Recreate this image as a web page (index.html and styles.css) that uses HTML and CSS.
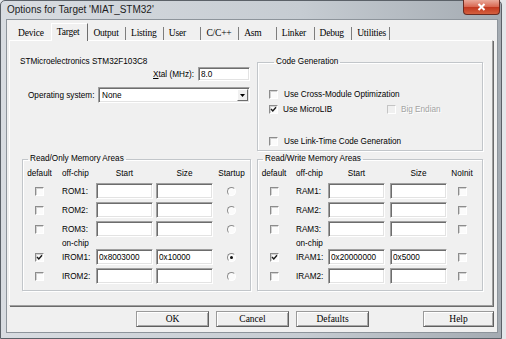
FILE: index.html
```html
<!DOCTYPE html>
<html lang="en">
<head>
    <meta charset="UTF-8">
    <title>Options for Target 'MIAT_STM32'</title>
    <link rel="stylesheet" href="styles.css">
</head>
<body>

    <div class="window">
        <!-- Title bar -->
        <div class="titlebar">
            <span class="title">Options for Target 'MIAT_STM32'</span>
            <span class="close">
                <svg width="9" height="8" viewBox="0 0 9 8"><path d="M1.5 1 L7.5 7 M7.5 1 L1.5 7" stroke="#fff" stroke-width="2"/></svg>
            </span>
        </div>

        <div class="client">
            <!-- Tabs -->
            <div class="tabs">
                <span class="tab first">Device</span>
                <span class="tab active">Target</span>
                <span class="tab">Output</span>
                <span class="tab">Listing</span>
                <span class="tab">User</span>
                <span class="tab">C/C++</span>
                <span class="tab">Asm</span>
                <span class="tab">Linker</span>
                <span class="tab">Debug</span>
                <span class="tab">Utilities</span>
            </div>

            <div class="panel">
                <div class="top">
                    <div class="device-col">
                        <div class="device">STMicroelectronics STM32F103C8</div>
                        <div class="xtal-row">
                            <label><u>X</u>tal (MHz):</label>
                            <input class="field xtal" type="text" value="8.0">
                        </div>
                        <div class="os-row">
                            <label>Operating system:</label>
                            <div class="select">
                                <span>None</span>
                                <span class="drop">
                                    <svg width="5" height="3" viewBox="0 0 5 3"><path d="M0 0 H5 L2.5 3 Z" fill="#000"/></svg>
                                </span>
                            </div>
                        </div>
                    </div>

                    <fieldset class="group codegen">
                        <legend>Code Generation</legend>
                        <div class="opt first-opt"><span class="cb"></span><span>Use Cross-Module Optimization</span></div>
                        <div class="opt two-col">
                            <div class="opt-inner"><span class="cb on"><svg width="7" height="7" viewBox="0 0 7 7"><path d="M1 3 L2.8 5 L6 1.2" stroke="#1a1a1a" stroke-width="1.4" fill="none"/></svg></span><span>Use MicroLIB</span></div>
                            <div class="opt-inner disabled"><span class="cb off"></span><span>Big Endian</span></div>
                        </div>
                        <div class="opt last-opt"><span class="cb"></span><span>Use Link-Time Code Generation</span></div>
                    </fieldset>
                </div>

                <div class="mem">
                    <!-- Read only areas -->
                    <fieldset class="group rom">
                        <legend>Read/Only Memory Areas</legend>
                        <div class="row head">
                            <span class="c">default</span>
                            <span class="l">off-chip</span>
                            <span class="h">Start</span>
                            <span class="h">Size</span>
                            <span class="c">Startup</span>
                        </div>
                        <div class="row mrow">
                            <span class="cb"></span>
                            <span class="l">ROM1:</span>
                            <input class="field" type="text" value="">
                            <input class="field" type="text" value="">
                            <span class="rb"></span>
                        </div>
                        <div class="row mrow">
                            <span class="cb"></span>
                            <span class="l">ROM2:</span>
                            <input class="field" type="text" value="">
                            <input class="field" type="text" value="">
                            <span class="rb"></span>
                        </div>
                        <div class="row mrow">
                            <span class="cb"></span>
                            <span class="l">ROM3:</span>
                            <input class="field" type="text" value="">
                            <input class="field" type="text" value="">
                            <span class="rb"></span>
                        </div>
                        <div class="row onchip">
                            <span></span>
                            <span class="l">on-chip</span>
                        </div>
                        <div class="row mrow first-chip">
                            <span class="cb on"><svg width="7" height="7" viewBox="0 0 7 7"><path d="M1 3 L2.8 5 L6 1.2" stroke="#1a1a1a" stroke-width="1.4" fill="none"/></svg></span>
                            <span class="l">IROM1:</span>
                            <input class="field" type="text" value="0x8003000">
                            <input class="field" type="text" value="0x10000">
                            <span class="rb on"></span>
                        </div>
                        <div class="row mrow">
                            <span class="cb"></span>
                            <span class="l">IROM2:</span>
                            <input class="field" type="text" value="">
                            <input class="field" type="text" value="">
                            <span class="rb"></span>
                        </div>
                    </fieldset>

                    <!-- Read/write areas -->
                    <fieldset class="group ram">
                        <legend>Read/Write Memory Areas</legend>
                        <div class="row head">
                            <span class="c">default</span>
                            <span class="l">off-chip</span>
                            <span class="h">Start</span>
                            <span class="h">Size</span>
                            <span class="c">NoInit</span>
                        </div>
                        <div class="row mrow">
                            <span class="cb"></span>
                            <span class="l">RAM1:</span>
                            <input class="field" type="text" value="">
                            <input class="field" type="text" value="">
                            <span class="cb"></span>
                        </div>
                        <div class="row mrow">
                            <span class="cb"></span>
                            <span class="l">RAM2:</span>
                            <input class="field" type="text" value="">
                            <input class="field" type="text" value="">
                            <span class="cb"></span>
                        </div>
                        <div class="row mrow">
                            <span class="cb"></span>
                            <span class="l">RAM3:</span>
                            <input class="field" type="text" value="">
                            <input class="field" type="text" value="">
                            <span class="cb"></span>
                        </div>
                        <div class="row onchip">
                            <span></span>
                            <span class="l">on-chip</span>
                        </div>
                        <div class="row mrow first-chip">
                            <span class="cb on"><svg width="7" height="7" viewBox="0 0 7 7"><path d="M1 3 L2.8 5 L6 1.2" stroke="#1a1a1a" stroke-width="1.4" fill="none"/></svg></span>
                            <span class="l">IRAM1:</span>
                            <input class="field" type="text" value="0x20000000">
                            <input class="field" type="text" value="0x5000">
                            <span class="cb"></span>
                        </div>
                        <div class="row mrow">
                            <span class="cb"></span>
                            <span class="l">IRAM2:</span>
                            <input class="field" type="text" value="">
                            <input class="field" type="text" value="">
                            <span class="cb"></span>
                        </div>
                    </fieldset>
                </div>
            </div>

            <!-- Dialog buttons -->
            <div class="buttons">
                <button type="button">OK</button>
                <button type="button">Cancel</button>
                <button type="button">Defaults</button>
                <button type="button" class="help">Help</button>
            </div>
        </div>
    </div>

</body>
</html>
```

FILE: styles.css
```css
/* Page */
body {
    margin: 0;
    background-color: #e4e7ea;
    font-family: "Liberation Sans", Arial, sans-serif;
    font-size: 8.2px;
    color: #000;
}

/* Window frame */
.window {
    width: 502px;
    height: 339px;
    box-sizing: border-box;
    border: 1px solid #5b6168;
    border-radius: 5px 5px 0 0;
    background: linear-gradient(to right, #d8dce1, #c6ccd2 60%, #a4abb2);
    display: flex;
    flex-direction: column;
}

.titlebar {
    height: 18px;
    flex: none;
    display: flex;
    justify-content: space-between;
    padding-left: 6px;
}

.title {
    font-size: 10px;
    line-height: 18px;
    color: #1c1c1c;
}

.close {
    width: 37px;
    height: 15px;
    box-sizing: border-box;
    margin-top: -1px;
    margin-right: 1px;
    border: 1px solid #6a2b21;
    border-top: none;
    border-radius: 0 0 4px 4px;
    background: linear-gradient(#eaa99a, #d8664f 50%, #c2381f 52%, #d4603f);
    display: flex;
    align-items: center;
    justify-content: center;
}

.client {
    flex: 1;
    margin: 0 3px 5px 5px;
    background-color: #f0f0f0;
    border: 1px solid #8d949b;
    display: flex;
    flex-direction: column;
}

/* Tabs */
.tabs {
    height: 20px;
    flex: none;
    display: flex;
    align-items: flex-end;
    padding-left: 6px;
    font-family: "Liberation Serif", "Times New Roman", serif;
    font-size: 9.5px;
    letter-spacing: -0.2px;
}

.tab {
    width: 37.7px;
    height: 13px;
    box-sizing: border-box;
    padding-left: 5px;
    line-height: 13px;
    border-right: 1px solid #7d7d7d;
    white-space: nowrap;
}

.tab.first {
    border-right: none;
}

.tab.active {
    height: 18px;
    margin-bottom: -1px;
    padding-top: 2px;
    line-height: 13px;
    border-top: 1px solid #fff;
    border-left: 1px solid #fff;
    border-right: 1px solid #6e6e6e;
    background-color: #f0f0f0;
    position: relative;
    z-index: 1;
}

/* Tab page */
.panel {
    height: 266px;
    box-sizing: border-box;
    margin: 0 4px 0 2px;
    border: 1px solid;
    border-color: #fff #a0a0a0 #a0a0a0 #fff;
    box-shadow: 1px 1px 0 #6b6b6b;
}

.top {
    display: flex;
    margin-top: 16px;
}

.device-col {
    width: 247px;
}

.device {
    height: 10px;
    line-height: 10px;
    padding-left: 10px;
}

.xtal-row {
    display: flex;
    justify-content: flex-end;
    align-items: center;
    gap: 4px;
    padding-right: 7px;
    height: 14px;
}

.os-row {
    display: flex;
    align-items: center;
    gap: 3px;
    margin-top: 6px;
    padding-left: 18px;
}

.os-row label {
    width: 67px;
}

/* Edit boxes */
.field {
    box-sizing: border-box;
    height: 16px;
    width: 57px;
    margin: 0;
    padding: 0 2px;
    font-family: "Liberation Sans", Arial, sans-serif;
    font-size: 8.2px;
    color: #000;
    background-color: #fff;
    border: 1px solid;
    border-color: #a0a0a0 #fff #fff #a0a0a0;
    box-shadow: inset 1px 1px 0 #6d6d6d, inset -1px -1px 0 #e3e3e3;
    outline: none;
}

.field.xtal {
    width: 52px;
    height: 14px;
}

.select {
    width: 152px;
    height: 16px;
    box-sizing: border-box;
    display: flex;
    align-items: center;
    justify-content: space-between;
    padding-left: 3px;
    background-color: #fff;
    border: 1px solid;
    border-color: #a0a0a0 #fff #fff #a0a0a0;
    box-shadow: inset 1px 1px 0 #6d6d6d, inset -1px -1px 0 #e3e3e3;
}

.drop {
    width: 11px;
    height: 12px;
    margin-right: 1px;
    box-sizing: border-box;
    background-color: #f0f0f0;
    border: 1px solid;
    border-color: #fff #6d6d6d #6d6d6d #fff;
    display: flex;
    align-items: center;
    justify-content: center;
}

/* Group boxes */
.group {
    margin: 0;
    padding: 0;
    box-sizing: border-box;
    border: 1px solid #c2c6ca;
    box-shadow: 1px 1px 0 #fff, inset 1px 1px 0 #fff;
    min-width: 0;
}

.group legend {
    margin-left: 5px;
    padding: 0 2px;
    line-height: 10px;
}

.codegen {
    width: 226px;
    height: 94px;
    padding-left: 11px;
}

.opt {
    display: flex;
    align-items: center;
    gap: 6px;
    height: 12px;
    margin-top: 3px;
}

.opt.first-opt {
    margin-top: 21px;
}

.opt.last-opt {
    margin-top: 20px;
}

.opt.two-col {
    display: grid;
    grid-template-columns: 112px auto;
}

.opt-inner {
    display: flex;
    align-items: center;
    gap: 5px;
}

.disabled {
    color: #a3a3a3;
    text-shadow: 1px 1px 0 #fff;
}

/* Check boxes and radio buttons */
.cb {
    width: 9px;
    height: 9px;
    box-sizing: border-box;
    background-color: #fbfbfb;
    border: 1px solid;
    border-color: #8c8c8c #fff #fff #8c8c8c;
    box-shadow: inset 1px 1px 0 #d2d2d2;
    display: flex;
    align-items: center;
    justify-content: center;
    flex: none;
}

.cb.off {
    background-color: #f0f0f0;
    border-color: #c4c4c4 #fff #fff #c4c4c4;
    box-shadow: none;
}

.rb {
    width: 9px;
    height: 9px;
    box-sizing: border-box;
    border-radius: 50%;
    background-color: #fbfbfb;
    border: 1px solid;
    border-color: #8c8c8c #fff #fff #8c8c8c;
    display: flex;
    align-items: center;
    justify-content: center;
}

.rb.on::after {
    content: "";
    width: 3px;
    height: 3px;
    border-radius: 50%;
    background-color: #111;
}

/* Memory areas */
.mem {
    display: flex;
    gap: 6px;
    margin-top: 3px;
    padding-left: 12px;
}

.rom, .ram {
    height: 137px;
    padding-top: 3px;
}

.rom {
    width: 229px;
}

.ram {
    width: 226px;
}

.row {
    display: grid;
    align-items: center;
}

.rom .row {
    grid-template-columns: 33px 40px 60px 57px 1fr;
}

.ram .row {
    grid-template-columns: 32px 38px 62px 58px 28px;
}

.row .cb, .row .rb {
    justify-self: center;
}

.row .l {
    padding-left: 6px;
}

.row .c {
    text-align: center;
}

.row .h {
    width: 57px;
    text-align: center;
}

.row.head {
    height: 12px;
}

.row.mrow {
    height: 16px;
    margin-top: 3px;
}

.rom .row.mrow:nth-child(3) , .ram .row.mrow:nth-child(3) {
    margin-top: 4px;
}

.row.onchip {
    height: 12px;
}

.row.mrow.first-chip {
    margin-top: 0;
}

/* Buttons */
.buttons {
    display: flex;
    gap: 7px;
    height: 16px;
    margin-top: 5px;
    padding-left: 129px;
    padding-right: 3px;
}

button {
    width: 73px;
    height: 16px;
    padding: 0;
    font-family: "Liberation Serif", "Times New Roman", serif;
    font-size: 9.5px;
    color: #000;
    background-color: #f0f0f0;
    border: 1px solid;
    border-color: #9a9a9a #5f5f5f #5f5f5f #9a9a9a;
    box-shadow: inset 1px 1px 0 #fff, inset -1px -1px 0 #a8a8a8;
}

button.help {
    margin-left: auto;
    width: 71px;
}
```
